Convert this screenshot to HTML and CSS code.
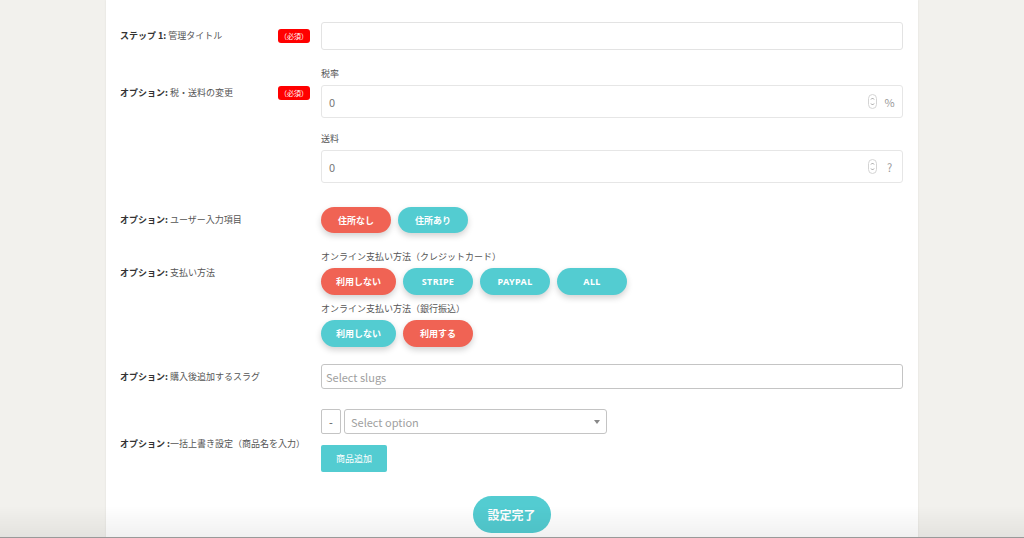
FILE: index.html
```html
<!DOCTYPE html>
<html lang="ja">
<head>
    <meta charset="UTF-8">
    <meta name="viewport" content="width=device-width, initial-scale=1.0">
    <title>商品設定</title>
    <link rel="stylesheet" href="styles.css">
</head>
<body>
    <div class="card">
        <div class="row">
            <div class="label-cell">
                <span class="label"><b>ステップ 1:</b> 管理タイトル</span>
                <span class="badge">（必須）</span>
            </div>
            <div class="block">
                <div class="text-input"></div>
            </div>
        </div>

        <div class="row row-tax">
            <div class="label-cell">
                <span class="label"><b>オプション:</b> 税・送料の変更</span>
                <span class="badge">（必須）</span>
            </div>
            <div class="block">
                <div class="sub">税率</div>
                <div class="num-input">
                    <span class="value">0</span>
                    <svg class="spinner" width="9" height="15" viewBox="0 0 9 15">
                        <rect x="0.5" y="0.5" width="8" height="14" rx="4" fill="none" stroke="#d4d4d4"/>
                        <path d="M3 5.5 L4.5 4 L6 5.5 M3 9.5 L4.5 11 L6 9.5" fill="none" stroke="#888" stroke-width="0.8"/>
                    </svg>
                    <span class="unit">%</span>
                </div>
            </div>
            <div class="block block-next">
                <div class="sub">送料</div>
                <div class="num-input">
                    <span class="value">0</span>
                    <svg class="spinner" width="9" height="15" viewBox="0 0 9 15">
                        <rect x="0.5" y="0.5" width="8" height="14" rx="4" fill="none" stroke="#d4d4d4"/>
                        <path d="M3 5.5 L4.5 4 L6 5.5 M3 9.5 L4.5 11 L6 9.5" fill="none" stroke="#888" stroke-width="0.8"/>
                    </svg>
                    <span class="unit">?</span>
                </div>
            </div>
        </div>

        <div class="row row-user">
            <div class="label-cell">
                <span class="label"><b>オプション:</b> ユーザー入力項目</span>
            </div>
            <div class="block">
                <div class="btn-group">
                    <span class="pill red">住所なし</span>
                    <span class="pill teal">住所あり</span>
                </div>
            </div>
        </div>

        <div class="row row-pay">
            <div class="label-cell">
                <span class="label"><b>オプション:</b> 支払い方法</span>
            </div>
            <div class="block">
                <div class="sub">オンライン支払い方法（クレジットカード）</div>
                <div class="btn-group">
                    <span class="pill red">利用しない</span>
                    <span class="pill teal latin">STRIPE</span>
                    <span class="pill teal latin">PAYPAL</span>
                    <span class="pill teal latin">ALL</span>
                </div>
            </div>
            <div class="block block-bank">
                <div class="sub">オンライン支払い方法（銀行振込）</div>
                <div class="btn-group">
                    <span class="pill teal">利用しない</span>
                    <span class="pill red">利用する</span>
                </div>
            </div>
        </div>

        <div class="row row-slug">
            <div class="label-cell">
                <span class="label"><b>オプション:</b> 購入後追加するスラグ</span>
            </div>
            <div class="block">
                <div class="select-box">Select slugs</div>
            </div>
        </div>

        <div class="row row-bulk">
            <div class="label-cell">
                <span class="label"><b>オプション :</b>一括上書き設定（商品名を入力）</span>
            </div>
            <div class="block">
                <div class="bulk-line">
                    <span class="minus">-</span>
                    <div class="dropdown">
                        <span>Select option</span>
                        <span class="caret"></span>
                    </div>
                </div>
                <span class="add-btn">商品追加</span>
            </div>
        </div>

        <div class="submit-wrap">
            <span class="submit">設定完了</span>
        </div>
    </div>

    <div class="bottom-fade"></div>
</body>
</html>
```

FILE: styles.css
```css
* {
    box-sizing: border-box;
    margin: 0;
    padding: 0;
}

body {
    font-family: 'Noto Sans CJK JP', 'Noto Sans', sans-serif;
    background: #f2f1ed;
    height: 538px;
    overflow: hidden;
    color: #444;
}

.card {
    width: 812px;
    margin: 0 auto;
    min-height: 538px;
    background: white;
    box-shadow: 0 0 2px rgba(0, 0, 0, 0.08);
    padding: 22px 15px 0 14px;
}

/* form rows */
.row {
    display: grid;
    grid-template-columns: 190px 1fr;
    column-gap: 11px;
}

.label-cell {
    grid-column: 1;
    grid-row: 1;
    align-self: center;
    display: flex;
    align-items: center;
    justify-content: space-between;
}

.row-bulk .label-cell {
    margin-top: 6px;
}

.label {
    font-size: 9px;
    line-height: 12px;
    color: #555;
}

.label b {
    color: #333;
    font-weight: 700;
}

.badge {
    background: #ff0000;
    color: white;
    font-size: 7px;
    line-height: 14px;
    height: 14px;
    padding: 0 2px;
    border-radius: 3px;
}

.block {
    grid-column: 2;
}

.block-next {
    margin-top: 15px;
}

.block-bank {
    margin-top: 8px;
}

.row-tax { margin-top: 18px; }
.row-user { margin-top: 24px; }
.row-pay { margin-top: 18px; }
.row-slug { margin-top: 17px; }
.row-bulk { margin-top: 20px; }

.sub {
    font-size: 9px;
    line-height: 12px;
    color: #555;
    margin-bottom: 5px;
}

/* inputs */
.text-input {
    height: 28px;
    border: 1px solid #e3e3e3;
    border-radius: 3px;
}

.num-input {
    height: 33px;
    border: 1px solid #e6e6e6;
    border-radius: 3px;
    display: flex;
    align-items: center;
    padding: 0 7px 0 7px;
    font-size: 11px;
    color: #777;
}

.num-input .value {
    flex: 1;
}

.spinner {
    display: block;
    margin-right: 7px;
}

.unit {
    width: 11px;
    text-align: center;
    color: #999;
    font-size: 11px;
}

/* pill buttons */
.btn-group {
    display: flex;
    gap: 7px;
}

.pill {
    height: 27px;
    min-width: 70px;
    padding: 0 15px;
    border-radius: 14px;
    display: flex;
    align-items: center;
    justify-content: center;
    color: white;
    font-size: 9px;
    font-weight: 700;
    box-shadow: 0 3px 6px rgba(0, 0, 0, 0.18);
}

.row-user .pill {
    height: 26px;
}

.pill.latin {
    font-family: 'Noto Sans', 'Lato', sans-serif;
    font-size: 9px;
    letter-spacing: 0.4px;
}

.pill.red {
    background: #f06354;
}

.pill.teal {
    background: #53ccd1;
}

/* selects */
.select-box {
    height: 25px;
    border: 1px solid #c4c4c4;
    border-radius: 3px;
    font-size: 11px;
    color: #a0a0a0;
    display: flex;
    align-items: center;
    padding-left: 4px;
}

.bulk-line {
    display: flex;
    gap: 3px;
}

.minus {
    width: 20px;
    height: 25px;
    border: 1px solid #c4c4c4;
    border-radius: 2px;
    display: flex;
    align-items: center;
    justify-content: center;
    font-size: 11px;
    color: #555;
}

.dropdown {
    width: 263px;
    height: 25px;
    border: 1px solid #c4c4c4;
    border-radius: 3px;
    display: flex;
    align-items: center;
    justify-content: space-between;
    padding: 0 6px 0 6px;
    font-size: 11px;
    color: #a0a0a0;
}

.caret {
    width: 0;
    height: 0;
    border-left: 3px solid transparent;
    border-right: 3px solid transparent;
    border-top: 4px solid #888;
}

.add-btn {
    display: inline-flex;
    align-items: center;
    justify-content: center;
    margin-top: 11px;
    width: 66px;
    height: 27px;
    background: #53ccd1;
    color: white;
    font-size: 9px;
    border-radius: 2px;
}

/* submit */
.submit-wrap {
    display: flex;
    justify-content: center;
    margin-top: 24px;
}

.submit {
    width: 78px;
    height: 37px;
    border-radius: 19px;
    background: #53ccd1;
    color: white;
    font-size: 12px;
    font-weight: 700;
    display: flex;
    align-items: center;
    justify-content: center;
}

.bottom-fade {
    position: fixed;
    left: 0;
    right: 0;
    bottom: 0;
    height: 32px;
    background: linear-gradient(to bottom, rgba(0, 0, 0, 0), rgba(0, 0, 0, 0.06));
    border-bottom: 1px solid #999;
    pointer-events: none;
}
```
